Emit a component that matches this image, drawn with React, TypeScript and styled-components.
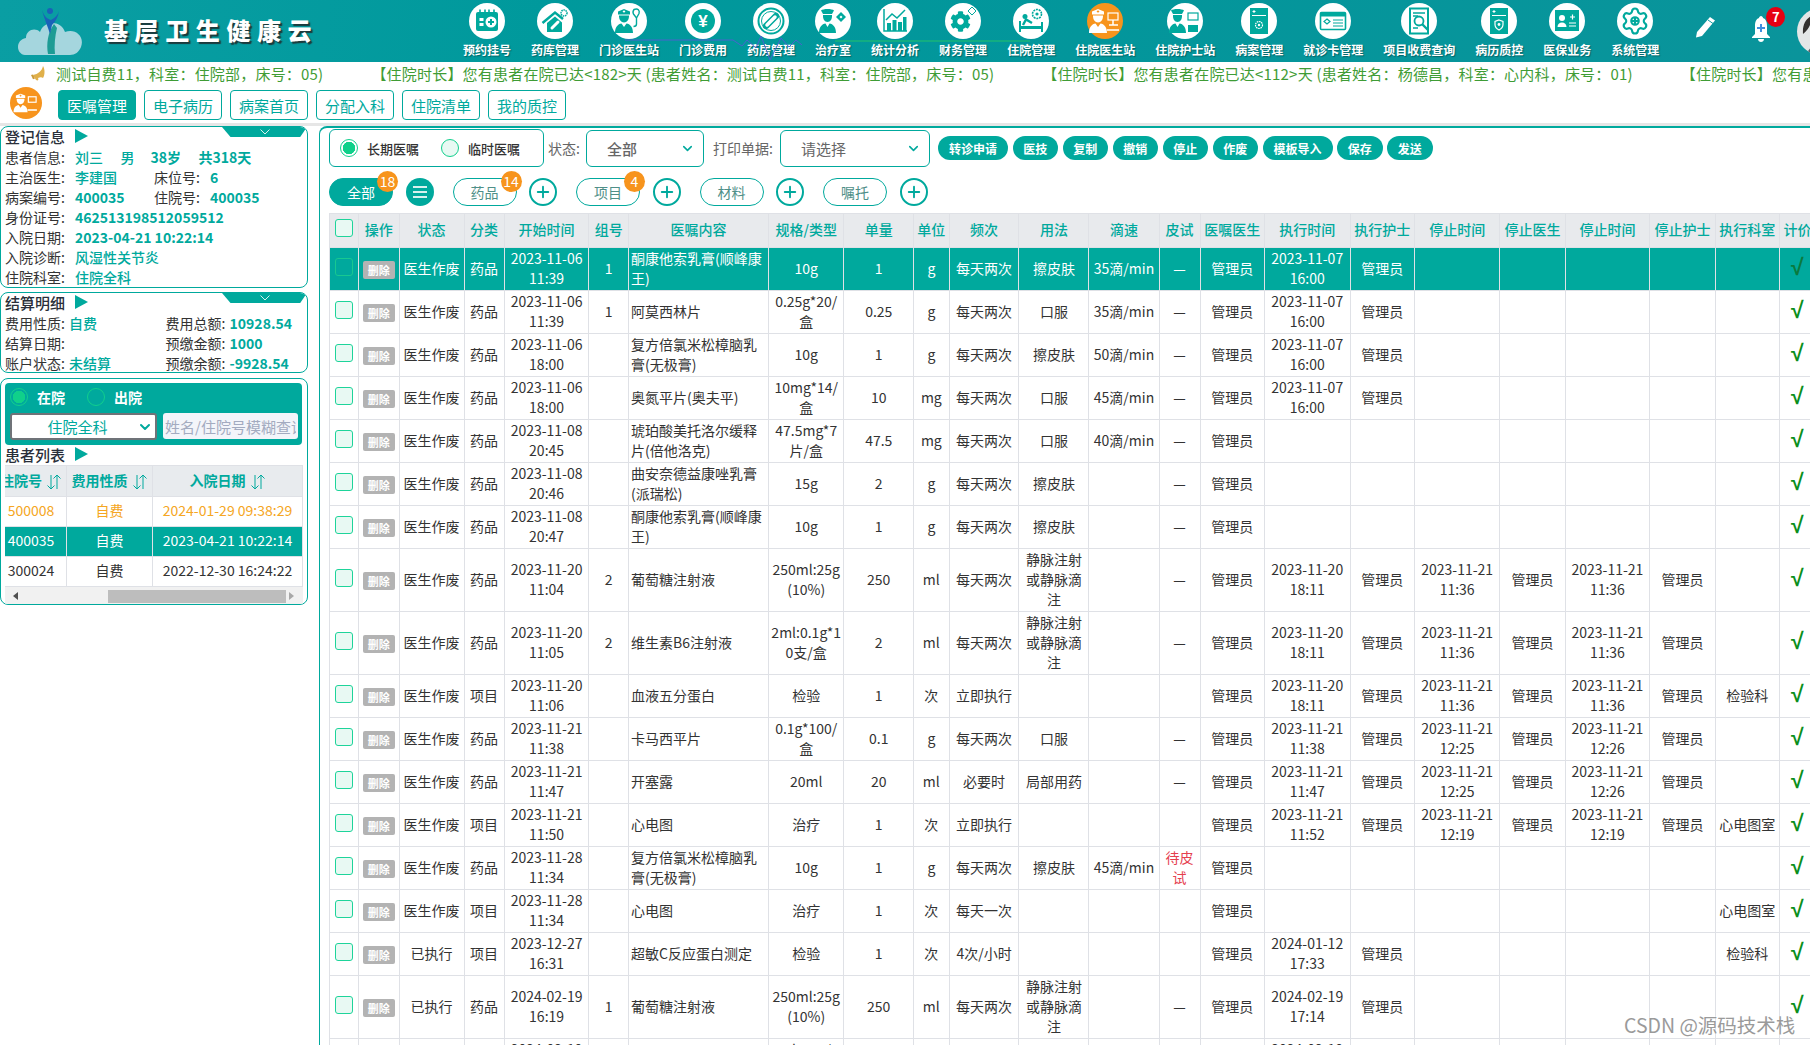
import React from 'react';
import styled, { createGlobalStyle } from 'styled-components';
import { ChevronDown, Plus, Settings } from 'lucide-react';
import { FaCog } from 'react-icons/fa';

const teal = '#00a99d';
const orange = '#f7941d';

const Global = createGlobalStyle`
  html, body { margin: 0; padding: 0; overflow: hidden; background: #fff; }
  body { font-family: "Noto Sans CJK SC", "Noto Sans", sans-serif; font-size: 14px; color: #333; }
  * { box-sizing: border-box; }
  button, input { font-family: inherit; }
`;

const Page = styled.div`
  position: relative;
  width: 1810px;
  height: 1045px;
  overflow: hidden;
  display: flex;
  flex-direction: column;
`;

/* top bar */
const Header = styled.header`
  position: relative;
  flex: none;
  height: 62px;
  display: flex;
  overflow: hidden;
  background: linear-gradient(100deg, #0a9ea3 0%, #00999c 30%, #03969b 60%, #0a949b 100%);
`;

const Brand = styled.div`
  flex: none;
  width: 453px;
  padding-left: 17px;
  display: flex;
  align-items: center;
  gap: 19px;
`;

const BrandName = styled.div`
  margin-bottom: 4px;
  font-size: 24px;
  font-weight: 900;
  letter-spacing: 6.6px;
  color: #fff;
  text-shadow: 2px 2px 1px #1c3a3c;
  white-space: nowrap;
`;

const NavList = styled.nav`
  display: flex;
  flex: none;
`;

const NavItem = styled.div`
  padding: 3px 10px 0;
  display: flex;
  flex-direction: column;
  align-items: center;
  white-space: nowrap;
`;

const NavDisc = styled.div<{ $on?: boolean }>`
  width: 36px;
  height: 36px;
  border-radius: 50%;
  display: grid;
  place-items: center;
  background: ${p => (p.$on ? orange : '#fff')};
  color: ${p => (p.$on ? '#fff' : teal)};
`;

const NavLabel = styled.div`
  margin-top: 3px;
  font-size: 12px;
  line-height: 16px;
  font-weight: 700;
  color: #fff;
  text-shadow: 1px 1px 1px rgba(0, 40, 40, 0.45);
`;

const Actions = styled.div`
  flex: none;
  margin-left: 26px;
  display: flex;
  gap: 35px;
  padding-top: 16px;
`;

const Bell = styled.div`
  position: relative;
  width: 20px;
  height: 26px;
`;

const BellBadge = styled.span`
  position: absolute;
  left: 15px;
  top: -9px;
  width: 19px;
  height: 20px;
  border-radius: 50%;
  background: #e60012;
  color: #fff;
  font-size: 13px;
  font-weight: 700;
  line-height: 20px;
  text-align: center;
`;

const Avatar = styled.div`
  position: absolute;
  left: 1797px;
  top: 8px;
  width: 47px;
  height: 47px;
  border-radius: 50%;
  overflow: hidden;
  background: #e4e6e6;
`;

const Squiggle = styled.svg`
  position: absolute;
  left: 620px;
  top: 30px;
  pointer-events: none;
`;

/* ticker */
const Ticker = styled.div`
  flex: none;
  height: 25px;
  padding: 0 0 3px 29px;
  display: flex;
  align-items: center;
  overflow: hidden;
  white-space: nowrap;
  color: #3f9c35;
  font-size: 15px;
  letter-spacing: 0.2px;
`;

const Horn = styled.svg`
  flex: none;
`;

const TickerItem = styled.span<{ $gap: number }>`
  flex: none;
  margin-left: ${p => p.$gap}px;
`;

/* tab row */
const TabRow = styled.div`
  flex: none;
  height: 36px;
  padding-left: 10px;
  display: flex;
  align-items: flex-start;
  gap: 8px;
`;

const TabDisc = styled.div`
  width: 32px;
  height: 32px;
  margin-right: 8px;
  border-radius: 50%;
  background: ${orange};
  color: #fff;
  display: grid;
  place-items: center;
`;

const Tab = styled.button<{ $on?: boolean }>`
  width: 78px;
  height: 30px;
  margin-top: 3px;
  padding: 0;
  border-radius: 4px;
  border: 1px solid ${teal};
  background: ${p => (p.$on ? teal : '#fff')};
  color: ${p => (p.$on ? '#fff' : teal)};
  font-size: 15px;
`;

const GreyRule = styled.div`
  flex: none;
  height: 3px;
  background: #e6e6e6;
`;

const Body = styled.div`
  flex: 1;
  min-height: 0;
  display: flex;
  gap: 11px;
`;

/* left column */
const Side = styled.aside`
  flex: none;
  width: 308px;
  display: flex;
  flex-direction: column;
`;

const Panel = styled.section<{ $h: number; $top?: number }>`
  position: relative;
  height: ${p => p.$h}px;
  margin-top: ${p => p.$top ?? 0}px;
  padding: 0 5px 0 4px;
  border: 1px solid ${teal};
  border-radius: 8px;
  overflow: hidden;
`;

const Collapse = styled.div`
  position: absolute;
  top: 0;
  right: 0;
  width: 85px;
  height: 10px;
  background: ${teal};
  clip-path: polygon(0 0, 100% 0, 92% 100%, 10% 100%);
  color: #d8f2ee;
  display: grid;
  place-items: center;
`;

const Heading = styled.h3`
  margin: 0;
  height: 20px;
  padding-bottom: 2px;
  display: flex;
  align-items: center;
  gap: 10px;
  font-size: 15px;
  font-weight: 500;
  color: #2a2f3a;
`;

const Arrow = styled.i`
  width: 0;
  height: 0;
  border-left: 13px solid ${teal};
  border-top: 7px solid transparent;
  border-bottom: 7px solid transparent;
`;

const InfoRow = styled.div`
  display: flex;
  height: 20px;
  line-height: 20px;
  white-space: nowrap;
`;

const Label = styled.span<{ $w: number }>`
  flex: none;
  width: ${p => p.$w}px;
  color: #333;
`;

const Value = styled.span<{ $w?: number; $size?: number; $weight?: number }>`
  flex: none;
  width: ${p => (p.$w ? `${p.$w}px` : 'auto')};
  color: ${teal};
  font-size: ${p => p.$size ?? 14}px;
  font-weight: ${p => p.$weight ?? 500};
`;

const Filter = styled.div`
  height: 62px;
  margin-top: 4px;
  padding: 3px 6px 0 5px;
  border-radius: 4px;
  background: ${teal};
`;

const RadioLine = styled.div`
  height: 22px;
  display: flex;
  align-items: center;
  color: #fff;
  font-weight: 700;
  font-size: 14px;
`;

const RoundDot = styled.i<{ $on?: boolean; $hollow?: boolean }>`
  flex: none;
  width: 18px;
  height: 18px;
  border-radius: 50%;
  border: 1px solid #12cf8d;
  background: ${p =>
    p.$on
      ? 'radial-gradient(circle, #10d08a 0 6px, transparent 6.5px)'
      : p.$hollow
        ? 'transparent'
        : '#e8f9f3'};
`;

const RadioText = styled.span<{ $w: number }>`
  width: ${p => p.$w}px;
  margin-left: 9px;
  white-space: nowrap;
`;

const FilterFields = styled.div`
  display: flex;
  gap: 6px;
  margin-top: 5px;
`;

const DeptSelect = styled.div`
  position: relative;
  flex: none;
  width: 147px;
  height: 27px;
  padding-right: 12px;
  border: 2px solid #6f7378;
  border-radius: 3px;
  background: #fff;
  color: ${teal};
  font-size: 15px;
  line-height: 23px;
  text-align: center;
  svg { position: absolute; right: 2px; top: 4px; }
`;

const SearchBox = styled.input`
  width: 135px;
  height: 26px;
  padding: 0 2px;
  border: 0;
  border-radius: 3px;
  background: #f3f5fa;
  font-size: 15px;
  &::placeholder { color: #a3abc0; opacity: 1; }
`;

const Scroller = styled.div`
  overflow: hidden;
  margin-right: -1px;
`;

const PatientTable = styled.table`
  table-layout: fixed;
  width: 307px;
  margin-left: -10px;
  border-collapse: collapse;
  th, td {
    border: 1px solid #dfe1e6;
    padding: 0 0 3px;
    text-align: center;
    white-space: nowrap;
    overflow: hidden;
    line-height: 20px;
  }
  th {
    height: 31px;
    background: #e8ebee;
    color: ${teal};
    font-weight: 600;
    font-size: 14px;
  }
  td { height: 30px; font-size: 14px; }
`;

const PatientRow = styled.tr<{ $tone?: 'warn' | 'on' }>`
  td {
    color: ${p => (p.$tone === 'warn' ? '#f5a623' : p.$tone === 'on' ? '#fff' : '#333')};
    background: ${p => (p.$tone === 'on' ? teal : '#fff')};
  }
`;

const SortMark = styled.svg`
  margin-left: 4px;
  vertical-align: -4px;
`;

const ScrollBar = styled.div`
  height: 18px;
  background: #f1f1f1;
  margin-right: -1px;
  display: flex;
  align-items: center;
  padding: 0 9px 0 8px;
`;

const ScrollArrow = styled.i<{ $dir: 'l' | 'r' }>`
  width: 0;
  height: 0;
  border-top: 4px solid transparent;
  border-bottom: 4px solid transparent;
  ${p => (p.$dir === 'l' ? 'border-right: 5px solid #505050;' : 'border-left: 5px solid #a8a8a8; margin-left: auto;')}
`;

const ScrollThumb = styled.div`
  width: 178px;
  height: 13px;
  margin-left: 90px;
  background: #bdbdbd;
`;

/* right column */
const Main = styled.main`
  flex: 1;
  min-width: 0;
  padding: 1px 0 0 9px;
  border-top: 2px solid ${teal};
  border-left: 1px solid ${teal};
  border-top-left-radius: 8px;
  overflow: hidden;
`;

const Toolbar = styled.div`
  height: 38px;
  display: flex;
  align-items: center;
`;

const KindBox = styled.div`
  flex: none;
  width: 215px;
  height: 38px;
  padding-left: 10px;
  display: flex;
  align-items: center;
  border: 1px solid ${teal};
  border-radius: 6px;
  font-size: 13px;
  font-weight: 500;
  color: #333;
`;

const BarLabel = styled.span<{ $left: number; $w: number }>`
  width: ${p => p.$w}px;
  margin-left: ${p => p.$left}px;
  color: #666;
  white-space: nowrap;
  font-size: 14px;
`;

const BarSelect = styled.div<{ $w: number; $left: number; $strong?: boolean }>`
  width: ${p => p.$w}px;
  margin-left: ${p => p.$left}px;
  height: 37px;
  padding: 0 8px 0 20px;
  display: flex;
  align-items: center;
  justify-content: space-between;
  border: 1px solid ${teal};
  border-radius: 6px;
  font-size: 15px;
  font-weight: ${p => (p.$strong ? 500 : 400)};
  color: #666;
  svg { color: ${teal}; }
`;

const Commands = styled.div`
  margin-left: 8px;
  display: flex;
  gap: 4.5px;
`;

const Command = styled.button<{ $wide?: boolean }>`
  width: ${p => (p.$wide ? 70 : 45.5)}px;
  height: 24px;
  padding: 0;
  border: 0;
  border-radius: 12px;
  background: ${teal};
  color: #fff;
  font-size: 12px;
  font-weight: 700;
`;

const FilterBar = styled.div`
  margin-top: 11px;
  height: 28px;
  display: flex;
  gap: 19px;
`;

const FilterGroup = styled.div`
  display: flex;
  gap: 12.5px;
`;

const Pill = styled.div<{ $on?: boolean }>`
  position: relative;
  width: 64px;
  height: 28px;
  border-radius: 14px;
  border: 1px solid ${teal};
  background: ${p => (p.$on ? teal : '#fff')};
  color: ${p => (p.$on ? '#fff' : '#4f8f88')};
  font-size: 14px;
  line-height: 26px;
  text-align: center;
`;

const PillBadge = styled.span`
  position: absolute;
  top: -8px;
  right: -6px;
  width: 21px;
  height: 21px;
  border-radius: 50%;
  background: ${orange};
  color: #fff;
  font-size: 14px;
  line-height: 21px;
  text-align: center;
`;

const RoundAdd = styled.div`
  width: 28px;
  height: 28px;
  border-radius: 50%;
  border: 2px solid ${teal};
  color: ${teal};
  display: grid;
  place-items: center;
`;

const RoundMenu = styled.div`
  width: 28px;
  height: 28px;
  border-radius: 50%;
  background: ${teal};
  display: flex;
  flex-direction: column;
  justify-content: center;
  align-items: center;
  gap: 3px;
  i { width: 14px; height: 2px; background: #d6f1ee; }
`;

const OrderTable = styled.table`
  table-layout: fixed;
  width: 1486px;
  margin-top: 7px;
  border-collapse: collapse;
`;

const HeadCell = styled.th`
  height: 34px;
  padding: 0 0 3px;
  border: 1px solid #dfe1e6;
  background: #e8eaed;
  color: ${teal};
  font-size: 14px;
  font-weight: 500;
  line-height: 20px;
  white-space: nowrap;
  overflow: hidden;
`;

const OrderRow = styled.tr<{ $tall?: boolean; $on?: boolean }>`
  height: ${p => (p.$tall ? 63 : 43)}px;
  background: ${p => (p.$on ? teal : '#fff')};
  color: ${p => (p.$on ? '#fff' : '#333')};
`;

const Cell = styled.td<{ $left?: boolean; $alert?: boolean }>`
  padding: 0 0 2px ${p => (p.$left ? '2px' : '0')};
  border: 1px solid #dfe1e6;
  font-size: 14px;
  line-height: 20px;
  text-align: ${p => (p.$left ? 'left' : 'center')};
  white-space: pre-line;
  overflow: hidden;
  ${p => p.$alert && 'color: #e5404f;'}
`;

const Check = styled.i<{ $on?: boolean }>`
  display: block;
  width: 18px;
  height: 18px;
  margin: -2px auto 0;
  border-radius: 3px;
  border: 1px solid ${p => (p.$on ? '#18c890' : '#1ed49a')};
  background: ${p => (p.$on ? 'transparent' : '#e8f9f3')};
`;

const Remove = styled.span`
  display: block;
  width: 32px;
  height: 18px;
  margin: 3px auto 0;
  border-radius: 2px;
  background: #b3b3b3;
  color: #fff;
  font-size: 11px;
  font-weight: 700;
  line-height: 18px;
  text-align: center;
`;

const Tick = styled.span<{ $on?: boolean }>`
  font-family: "Liberation Sans", sans-serif;
  color: ${p => (p.$on ? '#0a7a3e' : '#0b8f1c')};
  font-size: 23px;
  font-weight: 700;
  line-height: 20px;
`;

const Watermark = styled.div`
  position: absolute;
  left: 1624px;
  top: 1012px;
  font-size: 19.5px;
  line-height: 26px;
  color: #9a9a9a;
  text-shadow: 0 0 2px #fff;
  white-space: nowrap;
`;

/* icons, drawn on a 36 unit disc */
const Ic: React.FC<{ children: React.ReactNode }> = ({ children }) => (
  <svg width="36" height="36" viewBox="0 0 36 36" fill="currentColor">{children}</svg>
);

const Doctor = ({ x = 0, cut = '#fff' }: { x?: number; cut?: string }) => (
  <g transform={`translate(${x} 0)`}>
    <path d="M8 8.5l6-2.5 6 2.5v3H8z" />
    <path d="M9 12.5h10c.2 4-2 7-5 7s-5.200-3-5-7z" />
    <path d="M5 30c0-6 3-9 6.500-9.500l2.500 3.500 2.500-3.500C20 21 23 24 23 30z" />
    <path d="M12.800 8.500h2.400M14 7.300v2.400" stroke={cut} strokeWidth="1" />
  </g>
);

const Nurse = ({ x = 0 }: { x?: number }) => (
  <g transform={`translate(${x} 0)`}>
    <path d="M7 7.500C9 5.500 18 5.500 20 7.500l-2 3.500H9z" />
    <path d="M9 12h9c.3 4-1.500 7-4.500 7S8.700 16 9 12z" />
    <path d="M5 30c0-6 3-9 6.500-9.500L13.500 24l2-3.500C19 21 22 24 22 30z" />
  </g>
);

const Sheet = ({ children }: { children?: React.ReactNode }) => (
  <>
    <rect x="9" y="5" width="18" height="26" />
    <path d="M11.500 8.500h3M13 7v3M11 12.500h14" stroke="#fff" strokeWidth="1" />
    {children}
  </>
);

const navItems: { label: string; icon: React.ReactNode; on?: boolean }[] = [
  { label: '预约挂号', icon: <Ic><path d="M9 9h18a2 2 0 012 2v15a2 2 0 01-2 2H9a2 2 0 01-2-2V11a2 2 0 012-2z" /><path d="M11 6.500v4M16 6.500v4M20 6.500v4M25 6.500v4" stroke="currentColor" strokeWidth="1.600" /><rect x="10.500" y="15" width="4" height="3" fill="#fff" /><rect x="10.500" y="20" width="4" height="3" fill="#fff" /><circle cx="22" cy="19" r="5.500" fill="#fff" /><path d="M22 16v6M19 19h6" stroke="currentColor" strokeWidth="2" /></Ic> },
  { label: '药库管理', icon: <Ic><path d="M5.500 20L18 9.500 26 16" fill="none" stroke="currentColor" strokeWidth="2.500" /><path d="M10 20l8-6.500 7 6V29H10z" /><path d="M15 25l6-6" stroke="#fff" strokeWidth="3" strokeLinecap="round" /><circle cx="27" cy="10" r="3" fill="none" stroke="currentColor" strokeWidth="1.500" strokeDasharray="1.500 .7" /></Ic> },
  { label: '门诊医生站', icon: <Ic><Doctor x={-1} /><path d="M23 6.500c4-1.500 6 1 5 4l-2.500 4.500-3-4c-1-1.500-.5-3 .5-4.500zM25.500 15v6c0 2-1 2.500-3 2.500" fill="none" stroke="currentColor" strokeWidth="1.400" /></Ic> },
  { label: '门诊费用', icon: <Ic><circle cx="18" cy="18" r="12" /><text x="18" y="24" textAnchor="middle" fontSize="17" fontWeight="700" fill="#fff" fontFamily="Liberation Sans">¥</text></Ic> },
  { label: '药房管理', icon: <Ic><circle cx="18" cy="18" r="12.500" fill="none" stroke="currentColor" strokeWidth="2" /><circle cx="18" cy="18" r="9.500" fill="none" stroke="currentColor" strokeWidth="1" /><path d="M13 23l10-10" stroke="currentColor" strokeWidth="6.500" strokeLinecap="round" /><path d="M14 22l8-8" stroke="#fff" strokeWidth="3.500" strokeLinecap="round" /></Ic> },
  { label: '治疗室', icon: <Ic><Nurse x={-1} /><path d="M26 9l5 5-5 5-5-5z" /><path d="M26 12.500l1.500 1.500-1.500 1.500-1.500-1.500z" fill="#fff" /></Ic> },
  { label: '统计分析', icon: <Ic><path d="M7 6v22h23" fill="none" stroke="currentColor" strokeWidth="1.500" /><rect x="10" y="20" width="4" height="8" /><rect x="15.500" y="17" width="4" height="11" /><rect x="21" y="19" width="4" height="9" /><rect x="26" y="14" width="3.500" height="14" /><path d="M9 17l6-6 5 4 8-8" fill="none" stroke="currentColor" strokeWidth="1.500" /></Ic> },
  { label: '财务管理', icon: <Ic><g transform="translate(5 8)"><FaCog size={21} /></g><path d="M27 4l4 4-4 4-4-4z" fill="none" stroke="currentColor" strokeWidth="1" /></Ic> },
  { label: '住院管理', icon: <Ic><circle cx="12" cy="13.500" r="2.500" /><path d="M10 22l3-5.500 6 3.500" fill="none" stroke="currentColor" strokeWidth="2.400" /><path d="M6 18v11h2v-3h20v3h2V19h-2v4H8v-5z" /><circle cx="24" cy="11" r="4.500" fill="none" stroke="currentColor" strokeWidth="1.600" strokeDasharray="2 .8" /><circle cx="24" cy="11" r="1.600" /></Ic> },
  { label: '住院医生站', on: true, icon: <Ic><Doctor x={-3} cut={orange} /><rect x="21" y="10" width="10" height="7" fill="none" stroke="currentColor" strokeWidth="1.200" /><path d="M22 22h9M26 17v5M20 27h12" stroke="currentColor" strokeWidth="1.500" /></Ic> },
  { label: '住院护士站', icon: <Ic><Nurse x={-3} /><rect x="21" y="10" width="10" height="7" fill="none" stroke="currentColor" strokeWidth="1.200" /><path d="M21 22h10v7h-10z" /></Ic> },
  { label: '病案管理', icon: <Ic><Sheet><circle cx="18" cy="22" r="3.500" fill="none" stroke="#fff" strokeWidth="1.200" strokeDasharray="1.600 .7" /><circle cx="18" cy="22" r="1.200" fill="#fff" /></Sheet></Ic> },
  { label: '就诊卡管理', icon: <Ic><rect x="5.500" y="9.500" width="25" height="17" rx="1" fill="none" stroke="currentColor" strokeWidth="1.600" /><rect x="5.500" y="9.500" width="25" height="4" /><path d="M12 16l3 2.500-3 2.500-3-2.500z" fill="none" stroke="currentColor" strokeWidth="1.200" /><path d="M18 17h10M18 20h10M18 23h10" stroke="currentColor" strokeWidth="1.200" /></Ic> },
  { label: '项目收费查询', icon: <Ic><rect x="9" y="5.500" width="18" height="25" fill="none" stroke="currentColor" strokeWidth="2" /><path d="M12 10h12M12 13h5M12 25h5" stroke="currentColor" strokeWidth="1.400" /><circle cx="18" cy="18" r="4.500" fill="none" stroke="currentColor" strokeWidth="1.800" /><path d="M21 21l6 6" stroke="currentColor" strokeWidth="2.400" /></Ic> },
  { label: '病历质控', icon: <Ic><Sheet><path d="M18 17l4 1.500v3c0 3-2 4.500-4 5.500-2-1-4-2.500-4-5.500v-3z" fill="none" stroke="#fff" strokeWidth="1.200" /><circle cx="18" cy="21.500" r="1.400" fill="#fff" /></Sheet></Ic> },
  { label: '医保业务', icon: <Ic><rect x="6" y="7" width="24" height="21" /><circle cx="13" cy="15" r="3" fill="#fff" /><path d="M8.500 24c0-3 2-4.500 4.500-4.500s4.500 1.500 4.500 4.500z" fill="#fff" /><path d="M21 14h5M23.500 11.500v5M20 20h7M20 23h7" stroke="#fff" strokeWidth="1.200" /></Ic> },
  { label: '系统管理', icon: <Ic><g transform="translate(3 3)"><Settings size={30} strokeWidth={1.700} /></g><path d="M18 14v8M14 18h8" stroke="currentColor" strokeWidth="2.200" /></Ic> },
];

const tabs = ['医嘱管理', '电子病历', '病案首页', '分配入科', '住院清单', '我的质控'];
const commands = ['转诊申请', '医技', '复制', '撤销', '停止', '作废', '模板导入', '保存', '发送'];
const filters = [
  { label: '药品', count: '14' },
  { label: '项目', count: '4' },
  { label: '材料' },
  { label: '嘱托' },
];

const colWidths = [29, 40.5, 65, 40.2, 84.8, 39.5, 140, 75.5, 69.5, 35.7, 69.8, 69.9, 70.3, 40.9, 64.4, 85.6, 64.4, 85.5, 65.1, 84.8, 65.2, 64.4, 36];
const heads = ['操作', '状态', '分类', '开始时间', '组号', '医嘱内容', '规格/类型', '单量', '单位', '频次', '用法', '滴速', '皮试', '医嘱医生', '执行时间', '执行护士', '停止时间', '停止医生', '停止时间', '停止护士', '执行科室', '计价'];

const DRIP = '静脉注射\n或静脉滴\n注';
const M = '管理员';

// status|type|start|group|content|spec|dose|unit|freq|usage|drip|skin|doctor|exec|nurse|stop|stopdoc|stop2|stopnurse|dept
const rows = [
  `医生作废|药品|2023-11-06\n11:39|1|酮康他索乳膏(顺峰康\n王)|10g|1|g|每天两次|擦皮肤|35滴/min|—|${M}|2023-11-07\n16:00|${M}`,
  `医生作废|药品|2023-11-06\n11:39|1|阿莫西林片|0.25g*20/\n盒|0.25|g|每天两次|口服|35滴/min|—|${M}|2023-11-07\n16:00|${M}`,
  `医生作废|药品|2023-11-06\n18:00||复方倍氯米松樟脑乳\n膏(无极膏)|10g|1|g|每天两次|擦皮肤|50滴/min|—|${M}|2023-11-07\n16:00|${M}`,
  `医生作废|药品|2023-11-06\n18:00||奥氮平片(奥夫平)|10mg*14/\n盒|10|mg|每天两次|口服|45滴/min|—|${M}|2023-11-07\n16:00|${M}`,
  `医生作废|药品|2023-11-08\n20:45||琥珀酸美托洛尔缓释\n片(倍他洛克)|47.5mg*7\n片/盒|47.5|mg|每天两次|口服|40滴/min|—|${M}`,
  `医生作废|药品|2023-11-08\n20:46||曲安奈德益康唑乳膏\n(派瑞松)|15g|2|g|每天两次|擦皮肤||—|${M}`,
  `医生作废|药品|2023-11-08\n20:47||酮康他索乳膏(顺峰康\n王)|10g|1|g|每天两次|擦皮肤||—|${M}`,
  `医生作废|药品|2023-11-20\n11:04|2|葡萄糖注射液|250ml:25g\n(10%)|250|ml|每天两次|${DRIP}||—|${M}|2023-11-20\n18:11|${M}|2023-11-21\n11:36|${M}|2023-11-21\n11:36|${M}`,
  `医生作废|药品|2023-11-20\n11:05|2|维生素B6注射液|2ml:0.1g*1\n0支/盒|2|ml|每天两次|${DRIP}||—|${M}|2023-11-20\n18:11|${M}|2023-11-21\n11:36|${M}|2023-11-21\n11:36|${M}`,
  `医生作废|项目|2023-11-20\n11:06||血液五分蛋白|检验|1|次|立即执行||||${M}|2023-11-20\n18:11|${M}|2023-11-21\n11:36|${M}|2023-11-21\n11:36|${M}|检验科`,
  `医生作废|药品|2023-11-21\n11:38||卡马西平片|0.1g*100/\n盒|0.1|g|每天两次|口服||—|${M}|2023-11-21\n11:38|${M}|2023-11-21\n12:25|${M}|2023-11-21\n12:26|${M}`,
  `医生作废|药品|2023-11-21\n11:47||开塞露|20ml|20|ml|必要时|局部用药||—|${M}|2023-11-21\n11:47|${M}|2023-11-21\n12:25|${M}|2023-11-21\n12:26|${M}`,
  `医生作废|项目|2023-11-21\n11:50||心电图|治疗|1|次|立即执行||||${M}|2023-11-21\n11:52|${M}|2023-11-21\n12:19|${M}|2023-11-21\n12:19|${M}|心电图室`,
  `医生作废|药品|2023-11-28\n11:34||复方倍氯米松樟脑乳\n膏(无极膏)|10g|1|g|每天两次|擦皮肤|45滴/min|待皮\n试|${M}`,
  `医生作废|项目|2023-11-28\n11:34||心电图|治疗|1|次|每天一次||||${M}|||||||心电图室`,
  `已执行|项目|2023-12-27\n16:31||超敏C反应蛋白测定|检验|1|次|4次/小时||||${M}|2024-01-12\n17:33|${M}|||||检验科`,
  `已执行|药品|2024-02-19\n16:19|1|葡萄糖注射液|250ml:25g\n(10%)|250|ml|每天两次|${DRIP}||—|${M}|2024-02-19\n17:14|${M}`,
  `已执行|药品|2024-02-19\n16:20|1|维生素B6注射液|2ml:0.1g*1\n0支/盒|2|ml|每天两次|口服||—|${M}|2024-02-19\n17:14|${M}`,
].map(r => r.split('|'));

const TEXT_COLS = 20;

const SortIcon = () => (
  <SortMark width="16" height="16" viewBox="0 0 16 16" fill="none" stroke={teal} strokeWidth="1">
    <path d="M5 1v14M1.500 11.500L5 15l3.500-3.500M11 15V1M7.500 4.500L11 1l3.500 3.500" />
  </SortMark>
);

const Fold = () => (
  <Collapse>
    <svg width="10" height="6" viewBox="0 0 10 6" fill="none" stroke="currentColor" strokeWidth="1">
      <path d="M.5.5L5 5 9.500.5" />
    </svg>
  </Collapse>
);

export default function App() {
  return (
    <Page>
      <Global />
      <Header>
        <Brand>
          <svg width="68" height="50" viewBox="0 0 68 50">
            <path d="M8 49C-1 48-2 34 9 32c0-8 9-11 14-6C27 14 44 14 48 26c10-4 20 4 16 15-2 5-6 8-11 8z" fill="#a5d6de" />
            <path d="M31 48c-2-10 0-22 6-30l3 4c-2 8-3 18-2 26z" fill="#1d9c95" />
            <path d="M25 4c2 6 5 9 9 10 4-2 7-5 8-9-1 6-3 10-7 14l-2 9c-2-7-5-13-8-24z" fill="#1a62b8" />
            <circle cx="33" cy="5" r="3" fill="#1a62b8" />
          </svg>
          <BrandName>基层卫生健康云</BrandName>
        </Brand>
        <NavList>
          {navItems.map(n => (
            <NavItem key={n.label}>
              <NavDisc $on={n.on}>{n.icon}</NavDisc>
              <NavLabel>{n.label}</NavLabel>
            </NavItem>
          ))}
        </NavList>
        <Actions>
          <svg width="21" height="22" viewBox="0 0 21 22" fill="#fff">
            <path d="M15 1l5 3.500L7 20l-6 1.500L2 16z" />
            <path d="M13 4l5 3.500" stroke="#0a9ba0" strokeWidth="1" />
          </svg>
          <Bell>
            <svg width="20" height="26" viewBox="0 0 20 26" fill="#fff">
              <path d="M10 0c1 0 2 1 2 2 3 1 4 4 4 8v8l3 3v1H1v-1l3-3v-8c0-4 1-7 4-8 0-1 1-2 2-2z" />
              <path d="M7 23h6c0 2-1.500 3-3 3s-3-1-3-3z" />
              <path d="M10 8v8M6 12h8" stroke="#3f8fe0" strokeWidth="2" />
            </svg>
            <BellBadge>7</BellBadge>
          </Bell>
        </Actions>
        <Avatar>
          <svg width="47" height="47" viewBox="0 0 47 47">
            <path d="M6 26C5 12 13 6 24 6c8 0 13 5 14 12l-4-3c-8 2-16 1-20-1-1 4-3 8-8 12z" fill="#33302e" />
            <path d="M10 47c1-7 6-10 14-10s13 3 14 10z" fill="#5a6068" />
          </svg>
        </Avatar>
        <Squiggle width="420" height="30" viewBox="0 0 420 30" fill="none">
          <path d="M5 10h108l9 6 5-6 9 8 5-12 9 24 11-22 8 9 7-7 6 5" stroke="#4a62cf" strokeWidth="1" />
          <path d="M215 11h195" stroke="#22c36b" strokeWidth="1" />
        </Squiggle>
      </Header>

      <Ticker>
        <Horn width="16" height="15" viewBox="0 0 16 15">
          <path d="M14 0C13 5 9 8 4 9l3 5c2 1 3 0 2-2 2-1 4-1 5 0 2-3 2-9 0-12z" fill="#e0b04a" />
          <path d="M2 9l2-.500 2 4-2 .700z" fill="#c99a3a" />
        </Horn>
        <TickerItem $gap={11}>测试自费11，科室：住院部，床号：05)</TickerItem>
        <TickerItem $gap={48}>【住院时长】您有患者在院已达&lt;182&gt;天 (患者姓名：测试自费11，科室：住院部，床号：05)</TickerItem>
        <TickerItem $gap={48}>【住院时长】您有患者在院已达&lt;112&gt;天 (患者姓名：杨德昌，科室：心内科，床号：01)</TickerItem>
        <TickerItem $gap={48}>【住院时长】您有患者在院已达&lt;112&gt;天</TickerItem>
      </Ticker>

      <TabRow>
        <TabDisc>
          <svg width="28" height="28" viewBox="0 0 36 36" fill="currentColor"><Doctor x={-3} cut={orange} /><rect x="21" y="10" width="10" height="7" fill="none" stroke="currentColor" strokeWidth="1.500" /><path d="M20 27h12" stroke="currentColor" strokeWidth="2" /></svg>
        </TabDisc>
        {tabs.map((t, i) => <Tab key={t} $on={i === 0}>{t}</Tab>)}
      </TabRow>
      <GreyRule />

      <Body>
        <Side>
          <Panel $h={162}>
            <Fold />
            <Heading>登记信息<Arrow /></Heading>
            <InfoRow><Label $w={70}>患者信息:</Label><Value $w={45.600}>刘三</Value><Value $w={30}>男</Value><Value $w={48} $weight={700}>38岁</Value><Value $weight={700}>共318天</Value></InfoRow>
            <InfoRow><Label $w={70}>主治医生:</Label><Value $w={79}>李建国</Value><Label $w={56}>床位号:</Label><Value $weight={700}>6</Value></InfoRow>
            <InfoRow><Label $w={70}>病案编号:</Label><Value $w={79} $weight={700}>400035</Value><Label $w={56}>住院号:</Label><Value $weight={700}>400035</Value></InfoRow>
            <InfoRow><Label $w={70}>身份证号:</Label><Value $weight={700}>462513198512059512</Value></InfoRow>
            <InfoRow><Label $w={70}>入院日期:</Label><Value $weight={700}>2023-04-21 10:22:14</Value></InfoRow>
            <InfoRow><Label $w={70}>入院诊断:</Label><Value>风湿性关节炎</Value></InfoRow>
            <InfoRow><Label $w={70}>住院科室:</Label><Value>住院全科</Value></InfoRow>
          </Panel>

          <Panel $h={81} $top={4}>
            <Fold />
            <Heading>结算明细<Arrow /></Heading>
            <InfoRow><Label $w={64}>费用性质:</Label><Value $w={96.600}>自费</Value><Label $w={64}>费用总额:</Label><Value $weight={700}>10928.54</Value></InfoRow>
            <InfoRow><Label $w={64}>结算日期:</Label><Value $w={96.600} /><Label $w={64}>预缴金额:</Label><Value $weight={700}>1000</Value></InfoRow>
            <InfoRow><Label $w={64}>账户状态:</Label><Value $w={96.600}>未结算</Value><Label $w={64}>预缴余额:</Label><Value $weight={700}>-9928.54</Value></InfoRow>
          </Panel>

          <Panel $h={227} $top={5}>
            <Filter>
              <RadioLine>
                <RoundDot $on $hollow /><RadioText $w={50}>在院</RadioText>
                <RoundDot $hollow /><RadioText $w={50}>出院</RadioText>
              </RadioLine>
              <FilterFields>
                <DeptSelect>住院全科<ChevronDown size={16} strokeWidth={3} /></DeptSelect>
                <SearchBox readOnly placeholder="姓名/住院号模糊查询" />
              </FilterFields>
            </Filter>
            <Heading>患者列表<Arrow /></Heading>
            <Scroller>
              <PatientTable>
                <colgroup><col width="71" /><col width="86" /><col width="150" /></colgroup>
                <thead>
                  <tr>
                    <th>住院号<SortIcon /></th>
                    <th>费用性质<SortIcon /></th>
                    <th>入院日期<SortIcon /></th>
                  </tr>
                </thead>
                <tbody>
                  <PatientRow $tone="warn"><td>500008</td><td>自费</td><td>2024-01-29 09:38:29</td></PatientRow>
                  <PatientRow $tone="on"><td>400035</td><td>自费</td><td>2023-04-21 10:22:14</td></PatientRow>
                  <PatientRow><td>300024</td><td>自费</td><td>2022-12-30 16:24:22</td></PatientRow>
                </tbody>
              </PatientTable>
            </Scroller>
            <ScrollBar>
              <ScrollArrow $dir="l" />
              <ScrollThumb />
              <ScrollArrow $dir="r" />
            </ScrollBar>
          </Panel>
        </Side>

        <Main>
          <Toolbar>
            <KindBox>
              <RoundDot $on /><RadioText $w={74}>长期医嘱</RadioText>
              <RoundDot /><RadioText $w={52}>临时医嘱</RadioText>
            </KindBox>
            <BarLabel $left={4} $w={34}>状态:</BarLabel>
            <BarSelect $left={4} $w={118} $strong>全部<ChevronDown size={15} strokeWidth={2.500} /></BarSelect>
            <BarLabel $left={9} $w={64}>打印单据:</BarLabel>
            <BarSelect $left={3} $w={150}>请选择<ChevronDown size={15} strokeWidth={2.500} /></BarSelect>
            <Commands>
              {commands.map(c => <Command key={c} $wide={c.length > 2}>{c}</Command>)}
            </Commands>
          </Toolbar>

          <FilterBar>
            <FilterGroup>
              <Pill $on>全部<PillBadge>18</PillBadge></Pill>
              <RoundMenu><i /><i /><i /></RoundMenu>
            </FilterGroup>
            {filters.map(f => (
              <FilterGroup key={f.label}>
                <Pill>{f.label}{f.count && <PillBadge>{f.count}</PillBadge>}</Pill>
                <RoundAdd><Plus size={18} strokeWidth={2.500} /></RoundAdd>
              </FilterGroup>
            ))}
          </FilterBar>

          <OrderTable>
            <colgroup>{colWidths.map((w, i) => <col key={i} width={w} />)}</colgroup>
            <thead>
              <tr>
                <HeadCell><Check /></HeadCell>
                {heads.map((h, i) => <HeadCell key={i}>{h}</HeadCell>)}
              </tr>
            </thead>
            <tbody>
              {rows.map((r, i) => {
                const on = i === 0;
                return (
                  <OrderRow key={i} $on={on} $tall={r[9] === DRIP}>
                    <Cell><Check $on={on} /></Cell>
                    <Cell><Remove>删除</Remove></Cell>
                    {Array.from({ length: TEXT_COLS }, (_, c) => (
                      <Cell key={c} $left={c === 4} $alert={(r[c] ?? '').startsWith('待')}>{r[c] ?? ''}</Cell>
                    ))}
                    <Cell><Tick $on={on}>√</Tick></Cell>
                  </OrderRow>
                );
              })}
            </tbody>
          </OrderTable>
        </Main>
      </Body>
      <Watermark>CSDN @源码技术栈</Watermark>
    </Page>
  );
}
